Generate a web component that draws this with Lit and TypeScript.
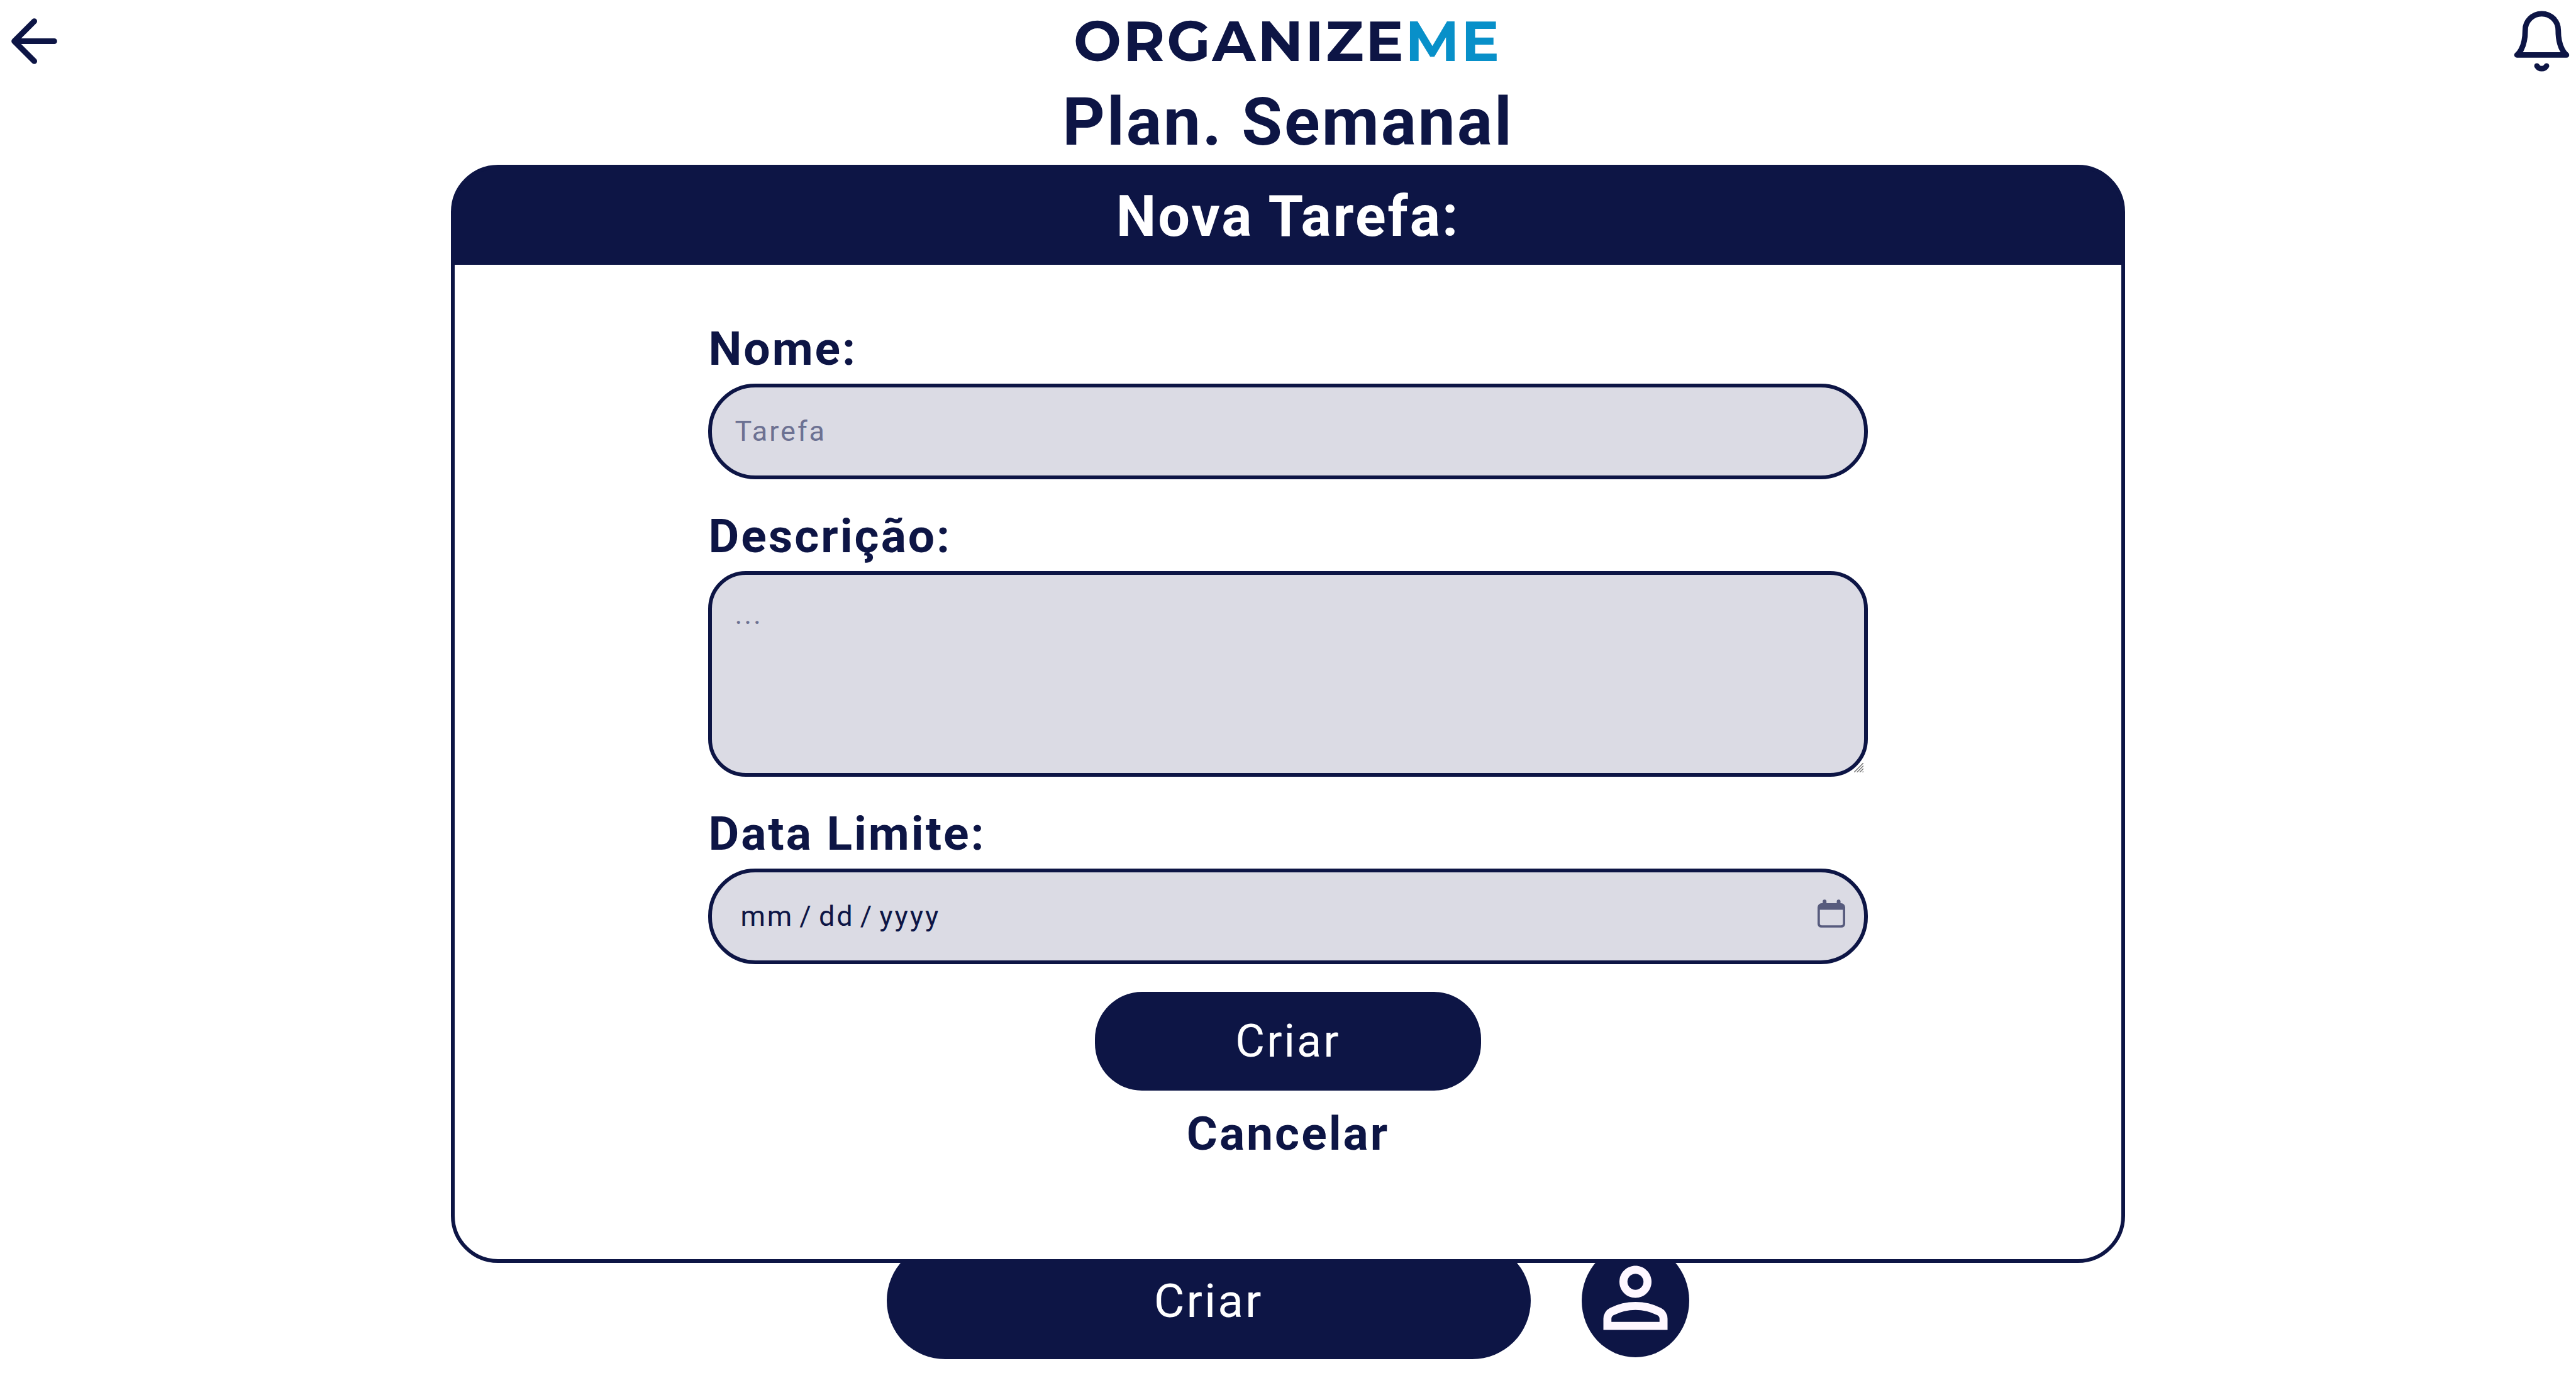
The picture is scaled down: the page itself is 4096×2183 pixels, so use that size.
import { LitElement, html, css } from "lit";
import { customElement } from "lit/decorators.js";

@customElement("app-root")
export class AppRoot extends LitElement {
  static styles = css`
    :host {
      --navy: #0d1545;
      --blue: #0890c9;
      --field: #dbdbe4;
      display: block;
      position: relative;
      color: var(--navy);
      background: #ffffff;
      font-family: Roboto, "Liberation Sans", sans-serif;
      letter-spacing: 3px;
    }
    * {
      box-sizing: border-box;
    }
    h1,
    h2,
    p {
      margin: 0;
    }
    button,
    input,
    textarea {
      font-family: inherit;
      letter-spacing: inherit;
      margin: 0;
    }
    a {
      color: inherit;
      text-decoration: none;
    }
    svg {
      display: block;
    }
    .page {
      display: flex;
      flex-direction: column;
      min-height: 100vh;
    }
    .topbar {
      display: grid;
      grid-template-columns: 1fr auto 1fr;
      align-items: center;
      padding: 11px 2px 11px 0;
    }
    .icon-button {
      padding: 0;
      border: 0;
      background: none;
      color: inherit;
      cursor: pointer;
    }
    .back {
      justify-self: start;
    }
    .bell {
      justify-self: end;
    }
    .back-icon {
      width: 109px;
      height: 109px;
    }
    .bell-icon {
      width: 105px;
      height: 105px;
    }
    .logo {
      font-family: Montserrat, Inter, sans-serif;
      font-weight: 700;
      font-size: 90px;
      line-height: 105px;
    }
    .logo-accent {
      color: var(--blue);
    }
    .title {
      font-size: 105px;
      line-height: 127px;
      font-weight: 700;
      text-align: center;
    }
    .actions {
      display: flex;
      justify-content: center;
      align-items: center;
      gap: 2vw;
      margin-top: auto;
      padding-bottom: 22px;
    }
    .primary {
      border: 0;
      color: #ffffff;
      background: var(--navy);
      cursor: pointer;
    }
    .create {
      width: 25vw;
      height: 186px;
      border-radius: 93px;
      font-size: 75px;
    }
    .profile {
      padding: 9px 9px 18px;
      border-radius: 50%;
      color: #fef7ff;
      background: var(--navy);
    }
    .profile-icon {
      width: 153px;
      height: 153px;
    }
    .dialog {
      position: absolute;
      top: 12vh;
      left: 0;
      right: 0;
      width: 65vw;
      min-height: 80vh;
      margin: 0 auto;
      border: 6px solid var(--navy);
      border-radius: 75px;
      background: linear-gradient(var(--navy), var(--navy)) top / 100% 80px no-repeat border-box, #ffffff;
    }
    .dialog-title {
      padding: 24px 0;
      border-radius: 69px 69px 0 0;
      color: #ffffff;
      background: var(--navy);
      font-size: 90px;
      line-height: 105px;
      font-weight: 700;
      text-align: center;
    }
    .form {
      display: flex;
      flex-direction: column;
      align-items: center;
      width: 45vw;
      margin: 0 auto;
      padding-top: 89px;
    }
    .group {
      display: flex;
      flex-direction: column;
      gap: 12px;
      width: 100%;
      margin-bottom: 46px;
    }
    .group-last {
      margin-bottom: 44px;
    }
    .label,
    .cancel {
      font-size: 75px;
      line-height: 88px;
      font-weight: 700;
    }
    .control {
      position: relative;
    }
    .field {
      display: block;
      width: 100%;
      height: 152px;
      padding: 0 36px;
      border: 6px solid var(--navy);
      border-radius: 75px;
      outline: none;
      color: var(--navy);
      background: var(--field);
      font-size: 45px;
    }
    .field::placeholder {
      color: #6c7192;
      opacity: 1;
    }
    .area {
      height: 327px;
      padding: 36px;
      border-radius: 60px;
      line-height: 53px;
      resize: vertical;
    }
    .area::-webkit-resizer {
      background: none;
    }
    .grip {
      position: absolute;
      right: 7px;
      bottom: 7px;
      width: 15px;
      height: 15px;
      color: #757575;
      pointer-events: none;
    }
    .date::-webkit-datetime-edit-month-field,
    .date::-webkit-datetime-edit-day-field,
    .date::-webkit-datetime-edit-year-field {
      padding: 0 9px;
    }
    .date::-webkit-calendar-picker-indicator {
      opacity: 0;
      cursor: pointer;
    }
    .calendar {
      position: absolute;
      top: 49px;
      right: 36px;
      width: 44px;
      height: 45px;
      color: #575b7d;
      pointer-events: none;
    }
    .submit {
      width: 15vw;
      height: 157px;
      border-radius: 75px;
      font-size: 72px;
    }
    .cancel {
      margin-top: 24px;
    }
  `;

  render() {
    return html`
      <div class="page">
        <header class="topbar">
          <button class="icon-button back" type="button" aria-label="Voltar">
            <svg class="back-icon" viewBox="0 0 24 24" fill="none" stroke="currentColor" stroke-width="2" stroke-linecap="round" stroke-linejoin="round">
              <path d="M19 12H5M12 19l-7-7 7-7" />
            </svg>
          </button>
          <p class="logo">ORGANIZE<span class="logo-accent">ME</span></p>
          <button class="icon-button bell" type="button" aria-label="Notificações">
            <svg class="bell-icon" viewBox="0 0 24 24" fill="none" stroke="currentColor" stroke-width="2" stroke-linecap="round" stroke-linejoin="round">
              <path d="M18 8A6 6 0 0 0 6 8c0 7-3 9-3 9h18s-3-2-3-9" />
              <path d="M13.73 21a2 2 0 0 1-3.46 0" />
            </svg>
          </button>
        </header>
        <h1 class="title">Plan. Semanal</h1>
        <footer class="actions">
          <button class="primary create" type="button">Criar</button>
          <a class="profile" href="#perfil" aria-label="Perfil">
            <svg class="profile-icon" viewBox="0 0 24 24" fill="currentColor">
              <path d="M12 6c1.100 0 2 .9 2 2s-.9 2-2 2-2-.9-2-2 .9-2 2-2m0-2C9.790 4 8 5.790 8 8s1.790 4 4 4 4-1.790 4-4-1.790-4-4-4zM4 20v-2.800q0-.85.438-1.563Q4.875 14.925 5.600 14.550q1.550-.775 3.150-1.163Q10.350 13 12 13t3.250.387q1.600.388 3.150 1.163.725.375 1.162 1.087Q20 16.350 20 17.200V20Zm2-2h12v-.800q0-.275-.137-.500-.138-.225-.363-.350-1.350-.675-2.725-1.013Q13.400 15 12 15t-2.775.337Q7.850 15.675 6.500 16.350q-.225.125-.362.350Q6 16.925 6 17.200Z" />
            </svg>
          </a>
        </footer>
      </div>
      <section class="dialog" role="dialog" aria-labelledby="dialog-title">
        <h2 class="dialog-title" id="dialog-title">Nova Tarefa:</h2>
        <form class="form" @submit=${(e: Event) => e.preventDefault()}>
          <div class="group">
            <label class="label" for="name">Nome:</label>
            <input class="field" id="name" type="text" placeholder="Tarefa" />
          </div>
          <div class="group">
            <label class="label" for="description">Descrição:</label>
            <div class="control">
              <textarea class="field area" id="description" placeholder="..."></textarea>
              <svg class="grip" viewBox="0 0 60 60" fill="none" stroke="currentColor" stroke-width="6" aria-hidden="true">
                <path d="M0 60L60 0M18 60L60 18M36 60L60 36M54 60L60 54" />
              </svg>
            </div>
          </div>
          <div class="group group-last">
            <label class="label" for="due">Data Limite:</label>
            <div class="control">
              <input class="field date" id="due" type="date" />
              <svg class="calendar" viewBox="0 0 59 60" fill="currentColor" aria-hidden="true">
                <path fill-rule="evenodd" d="M11 8V4a4 4 0 0 1 8 0v4h22V4a4 4 0 0 1 8 0v4h1a9 9 0 0 1 9 9v35a8 8 0 0 1-8 8H8a8 8 0 0 1-8-8V17a9 9 0 0 1 9-9zM5 22v29a4 4 0 0 0 4 4h41a4 4 0 0 0 4-4V22z" />
              </svg>
            </div>
          </div>
          <button class="primary submit" type="submit">Criar</button>
          <a class="cancel" href="#cancelar">Cancelar</a>
        </form>
      </section>
    `;
  }
}
